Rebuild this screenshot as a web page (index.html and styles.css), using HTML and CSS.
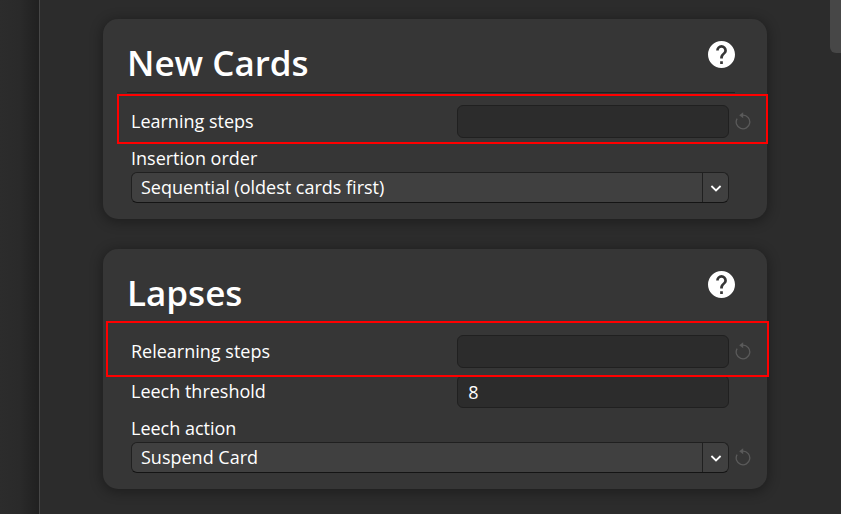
FILE: index.html
```html
<!DOCTYPE html>
<html lang="en">
<head>
    <meta charset="UTF-8">
    <meta name="viewport" content="width=device-width, initial-scale=1.0">
    <title>Deck Options</title>
    <link rel="stylesheet" href="styles.css">
</head>
<body>
    <svg class="icon-defs" aria-hidden="true">
        <symbol id="help" viewBox="2 2 20 20">
            <path d="M15.07,11.25L14.17,12.17C13.45,12.89 13,13.5 13,15H11V14.5C11,13.39 11.45,12.39 12.17,11.67L13.41,10.41C13.78,10.05 14,9.55 14,9C14,7.89 13.1,7 12,7A2,2 0 0,0 10,9H8A4,4 0 0,1 12,5A4,4 0 0,1 16,9C16,9.88 15.64,10.67 15.07,11.25M13,19H11V17H13M12,2A10,10 0 0,0 2,12A10,10 0 0,0 12,22A10,10 0 0,0 22,12C22,6.47 17.5,2 12,2Z"/>
        </symbol>
        <symbol id="revert" viewBox="0 0 16 20">
            <path d="M8 3.2A6.8 6.8 0 1 1 2.1 6.6" fill="none" stroke="currentColor" stroke-width="1.3"/>
            <path d="M4.2 3.2L8.2.2V6.2z"/>
        </symbol>
        <symbol id="chevron" viewBox="0 0 12 8">
            <path d="M1.4 2L6 6.4L10.6 2" fill="none" stroke="currentColor" stroke-width="1.8"/>
        </symbol>
    </svg>

    <div class="page">
        <div class="sidebar"></div>

        <main class="options">
            <section class="card">
                <div class="card-header">
                    <h1>New Cards</h1>
                    <button class="help-button" aria-label="Help"><svg><use href="#help"/></svg></button>
                </div>
                <div class="settings">
                    <div class="row highlight">
                        <label for="learning-steps">Learning steps</label>
                        <input type="text" id="learning-steps">
                        <button class="revert-button" aria-label="Revert"><svg><use href="#revert"/></svg></button>
                    </div>
                    <div class="row stacked">
                        <label for="insertion-order">Insertion order</label>
                        <div class="select-box">
                            <select id="insertion-order">
                                <option>Sequential (oldest cards first)</option>
                            </select>
                            <span class="arrow"><svg><use href="#chevron"/></svg></span>
                        </div>
                    </div>
                </div>
            </section>

            <section class="card">
                <div class="card-header">
                    <h1>Lapses</h1>
                    <button class="help-button" aria-label="Help"><svg><use href="#help"/></svg></button>
                </div>
                <div class="settings">
                    <div class="row highlight highlight-wide">
                        <label for="relearning-steps">Relearning steps</label>
                        <input type="text" id="relearning-steps">
                        <button class="revert-button" aria-label="Revert"><svg><use href="#revert"/></svg></button>
                    </div>
                    <div class="row">
                        <label for="leech-threshold">Leech threshold</label>
                        <input type="text" id="leech-threshold" value="8">
                    </div>
                    <div class="row stacked">
                        <label for="leech-action">Leech action</label>
                        <div class="select-box">
                            <select id="leech-action">
                                <option>Suspend Card</option>
                            </select>
                            <span class="arrow"><svg><use href="#chevron"/></svg></span>
                        </div>
                        <button class="revert-button" aria-label="Revert"><svg><use href="#revert"/></svg></button>
                    </div>
                </div>
            </section>
        </main>

        <div class="scrollbar"><div class="thumb"></div></div>
    </div>
</body>
</html>
```

FILE: styles.css
```css
* {
    box-sizing: border-box;
}

body {
    margin: 0;
    background-color: #2c2c2c;
    color: #fff;
    font-family: 'Segoe UI', 'Open Sans', 'Noto Sans', sans-serif;
    font-size: 18px;
    line-height: 27px;
}

.icon-defs {
    display: none;
}

svg {
    display: block;
    fill: currentColor;
}

.page {
    display: flex;
    min-height: 100vh;
}

.sidebar {
    width: 40px;
    border-right: 1px solid #474747;
    background: linear-gradient(to right, #2c2c2c 0%, #2a2a2a 50%, #202020 100%);
}

.options {
    flex: 1;
    display: flex;
    flex-direction: column;
    gap: 30px;
    padding: 19px 63px 22px;
}

.scrollbar {
    width: 11px;
}

.thumb {
    height: 53px;
    background-color: #474747;
    border-radius: 0 0 0 6px;
}

.card {
    background-color: #363636;
    border-radius: 15px;
    box-shadow: 0 2px 12px 2px rgba(0, 0, 0, 0.3);
}

.card-header {
    display: flex;
    justify-content: space-between;
    align-items: flex-start;
    height: 74px;
    margin: 0 32px 0 24px;
    padding-top: 22px;
    border-bottom: 1px solid #202020;
}

.card-header h1 {
    margin: 0;
    font-size: 35px;
    font-weight: 600;
    line-height: 44px;
}

button {
    padding: 0;
    border: none;
    background: none;
    color: inherit;
    cursor: pointer;
}

.help-button svg {
    width: 27px;
    height: 27px;
}

.settings {
    display: flex;
    flex-direction: column;
    gap: 7px;
    padding: 12px 16px 16px 28px;
}

.row {
    position: relative;
    display: grid;
    grid-template-columns: 6fr 5fr 22px;
    align-items: center;
}

.stacked {
    grid-template-columns: 1fr 22px;
}

.stacked label {
    grid-column: 1 / -1;
}

.highlight::after {
    content: "";
    position: absolute;
    inset: -11px -17px -6px -14px;
    border: 2px solid #ff0000;
    pointer-events: none;
    z-index: 1;
}

.highlight-wide::after {
    inset: -14px -18px -9px -25px;
}

input[type="text"] {
    width: 100%;
    height: 33px;
    padding: 0 10px;
    border: 1px solid #202020;
    border-radius: 6px;
    background-color: #2c2c2c;
    color: #fff;
    font: inherit;
    outline: none;
}

.select-box {
    display: flex;
    position: relative;
    height: 31px;
    border: 1px solid #202020;
    border-bottom-color: #141414;
    border-radius: 6px;
    background-color: #404040;
}

select {
    appearance: none;
    width: 100%;
    padding: 0 36px 0 9px;
    border: none;
    background: none;
    color: #fff;
    font: inherit;
    outline: none;
}

.arrow {
    position: absolute;
    top: 0;
    right: 0;
    bottom: 0;
    display: flex;
    align-items: center;
    justify-content: center;
    width: 26px;
    border-left: 1px solid #202020;
    pointer-events: none;
}

.arrow svg {
    width: 12px;
    height: 8px;
}

.revert-button {
    justify-self: end;
    color: #5a5a5a;
}

.revert-button svg {
    width: 16px;
    height: 20px;
}
```
